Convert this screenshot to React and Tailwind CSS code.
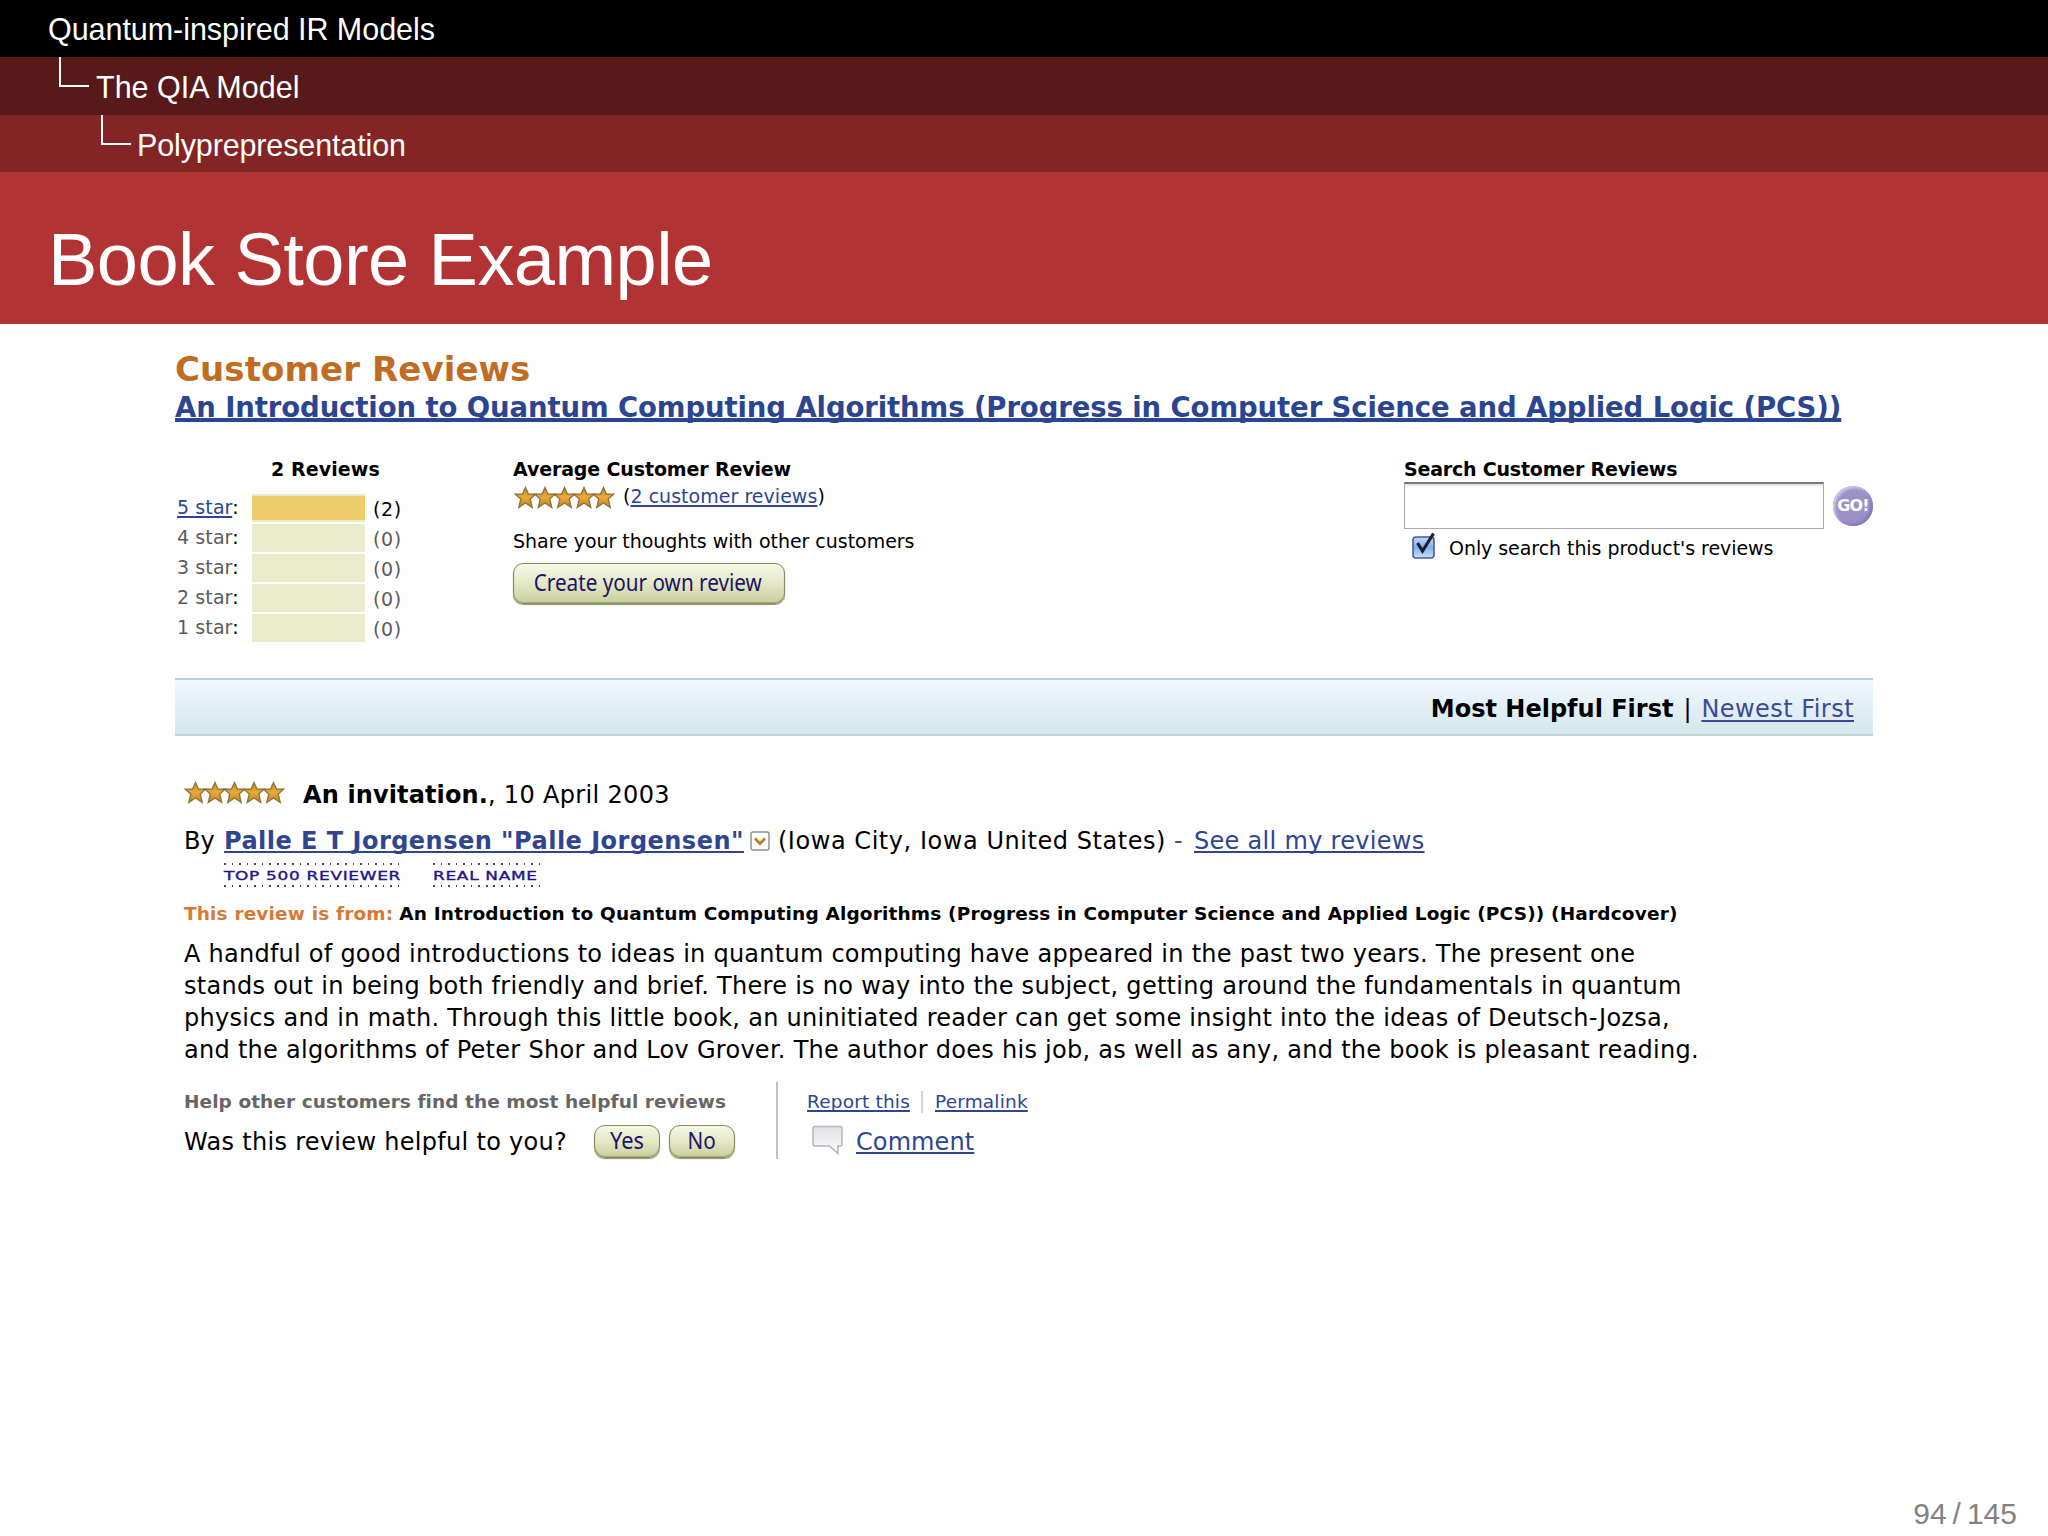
const link = "text-[#2f4590] underline underline-offset-[2px] decoration-2 [text-decoration-skip-ink:none]";

const ratings = [
  { label: "5 star", count: 2, active: true },
  { label: "4 star", count: 0 },
  { label: "3 star", count: 0 },
  { label: "2 star", count: 0 },
  { label: "1 star", count: 0 },
];

function Stars({ className = "" }) {
  return (
    <svg width="102" height="23" viewBox="0 0 102 23" className={className}>
      <defs>
        <linearGradient id="gold" x1="0" y1="0" x2="0" y2="1">
          <stop offset="0" stopColor="#c98d2c" />
          <stop offset="0.5" stopColor="#eaa936" />
          <stop offset="1" stopColor="#bd8122" />
        </linearGradient>
      </defs>
      {[0, 19.5, 39, 58.5, 78].map((x) => (
        <path
          key={x}
          transform={`translate(${x} 0)`}
          d="M11.5 1.6 L14.4 8 L21.6 8.2 L16.2 13 L18.2 21.4 L11.5 17 L4.8 21.4 L6.8 13 L1.4 8.2 L8.6 8 Z"
          fill="url(#gold)"
          stroke="#92753a"
          strokeWidth="1.4"
          strokeLinejoin="miter"
        />
      ))}
    </svg>
  );
}

function Branch() {
  return <span className="h-[29.5px] w-[30px] border-b-[2.5px] border-l-[2.5px] border-white" />;
}

function PillButton({ children, className = "" }) {
  return (
    <button
      className={`flex items-center justify-center border border-[#84895f] bg-linear-to-b from-[#f6f8e6] via-[#e4e8c6] to-[#c9cf9d] font-['Noto_Sans'] text-[#1c1466] shadow-[inset_0_-1px_1px_#a3a97c,0_1px_1px_#8f9468] ${className}`}
    >
      {children}
    </button>
  );
}

function Badge({ children, className = "" }) {
  const dots = "h-[2px] bg-[repeating-linear-gradient(90deg,#4a4a55_0_1.6px,transparent_1.6px_7.56px)]";
  return (
    <div className={`flex h-[24px] flex-col justify-between ${className}`}>
      <div className={dots} />
      <div className="origin-left scale-x-130 text-[13px] leading-[15px] tracking-[0.55px] text-[#1f1590] [-webkit-text-stroke:0.4px_#1f1590]">
        {children}
      </div>
      <div className={dots} />
    </div>
  );
}

function Header() {
  return (
    <header className="font-['Liberation_Sans'] text-[30.5px] text-white">
      <div className="h-[57px] bg-black pl-[48px] leading-[59px] tracking-[-0.05px]">Quantum-inspired IR Models</div>
      <div className="flex h-[58px] items-start bg-[#581a19] pl-[59px]">
        <Branch />
        <span className="pl-[7px] leading-[60px]">The QIA Model</span>
      </div>
      <div className="flex h-[57px] items-start bg-[#842525] pl-[101px]">
        <Branch />
        <span className="pl-[6px] leading-[60px] tracking-[-0.13px]">Polyprepresentation</span>
      </div>
      <h1 className="h-[152px] bg-[#b23333] pt-[48px] pl-[48px] text-[74px] leading-[80px] tracking-[-0.55px]">
        Book Store Example
      </h1>
    </header>
  );
}

function Histogram() {
  return (
    <div className="w-[338px]">
      <div className="ml-[96px] font-bold tracking-[0.1px]">2 Reviews</div>
      <div className="mt-[12px] flex flex-col gap-[2px]">
        {ratings.map((r) => (
          <div key={r.label} className="flex h-[28px] leading-[27px]">
            <div className="w-[77px] pl-[2px] tracking-[0.1px]">
              <span className={r.active ? link : "text-[#5c5c5c]"}>{r.label}</span>:
            </div>
            <div className={`h-full w-[113px] ${r.active ? "border-y-2 border-[#e9edcb] bg-[#eecd6b]" : "bg-[#e9edcb]"}`} />
            <div className={`pl-[8px] leading-[30px] tracking-[0.6px] ${r.active ? "" : "text-[#5c5c5c]"}`}>({r.count})</div>
          </div>
        ))}
      </div>
    </div>
  );
}

function Summary() {
  return (
    <div className="w-[891px]">
      <div className="font-bold tracking-[-0.13px]">Average Customer Review</div>
      <div className="flex h-[26px] leading-[28px]">
        <Stars className="mt-[4px] ml-px block" />
        <span className="ml-[7px] tracking-[0.03px]">
          (<a className={link}>2 customer reviews</a>)
        </span>
      </div>
      <div className="mt-[20px] tracking-[-0.03px]">Share your thoughts with other customers</div>
      <PillButton className="mt-[9px] h-[41px] w-[272px] rounded-[10px] text-[23px]">
        <span className="-mt-[3px] -ml-[2px] scale-x-90">Create your own review</span>
      </PillButton>
    </div>
  );
}

function Search() {
  return (
    <div className="w-[469px]">
      <div className="font-bold tracking-[-0.2px]">Search Customer Reviews</div>
      <div className="flex items-start">
        <div className="h-[47px] w-[420px] border border-t-2 border-[#a9a9b0] border-t-[#77777b] bg-white shadow-[inset_0_2px_2px_#e4e4e4]" />
        <button className="mt-[4px] ml-[9px] flex size-[40px] items-center justify-center rounded-full bg-[#9b90ca] text-[16px] font-bold tracking-[-0.8px] text-white shadow-[inset_2px_2px_3px_#cfcbe2,inset_-2px_-2px_3px_#8378b4]">
          GO!
        </button>
      </div>
      <div className="mt-[2px] flex">
        <svg width="28" height="30" viewBox="0 0 28 30" className="ml-[7px] block">
          <defs>
            <linearGradient id="box" x1="0" y1="0" x2="0" y2="1">
              <stop offset="0" stopColor="#c3d6f6" />
              <stop offset="0.5" stopColor="#86b0ea" />
              <stop offset="1" stopColor="#bfe3fb" />
            </linearGradient>
          </defs>
          <rect x="2" y="6" width="21" height="21" rx="3" fill="url(#box)" stroke="#4a5c96" strokeWidth="1.6" />
          <path d="M6.5 12 L11.5 20 L22.5 2.5" fill="none" stroke="#1a2030" strokeWidth="3.2" />
        </svg>
        <span className="mt-[4px] ml-[10px] tracking-[-0.06px]">Only search this product's reviews</span>
      </div>
    </div>
  );
}

function Review() {
  return (
    <article className="pt-[43px] pl-[9px] text-[24px]">
      <div className="flex h-[32px] leading-[32px]">
        <Stars className="mt-[2px] block" />
        <b className="ml-[17px] tracking-[0.12px]">An invitation.</b>
        <span className="tracking-[0.33px]">, 10 April 2003</span>
      </div>
      <div className="mt-[14px] flex h-[32px] leading-[32px]">
        <span className="w-[40px]">By</span>
        <a className={`tracking-[0.48px] font-bold ${link}`}>Palle E T Jorgensen "Palle Jorgensen"</a>
        <svg width="20" height="20" viewBox="0 0 20 20" className="mt-[6px] ml-[6px] block">
          <rect x="1" y="1" width="18" height="18" rx="2" fill="#fefefe" stroke="#8c8c8c" strokeWidth="1.4" />
          <path d="M5 7.5 L10 12.5 L15 7.5" fill="none" stroke="#bf7a1c" strokeWidth="2.8" />
        </svg>
        <span className="ml-[8px] tracking-[0.55px]">(Iowa City, Iowa United States)</span>
        <span className="ml-[8px] w-[20px] text-[#555]">-</span>
        <a className={`tracking-[0.3px] ${link}`}>See all my reviews</a>
      </div>
      <div className="mt-[6px] ml-[40px] flex">
        <Badge className="w-[176px]">TOP 500 REVIEWER</Badge>
        <Badge className="ml-[33px] w-[108px]">REAL NAME</Badge>
      </div>
      <div className="mt-[14px] flex h-[26px] gap-[6px] text-[18.5px] leading-[26px] font-bold">
        <span className="tracking-[0.16px] text-[#d57a36]">This review is from:</span>
        <span className="tracking-[0.17px]">
          An Introduction to Quantum Computing Algorithms (Progress in Computer Science and Applied Logic (PCS)) (Hardcover)
        </span>
      </div>
      <p className="mt-[11px] leading-[32px] tracking-[0.28px]">
        <span className="tracking-[0.25px]">
          A handful of good introductions to ideas in quantum computing have appeared in the past two years. The present one
        </span>
        <br />
        stands out in being both friendly and brief. There is no way into the subject, getting around the fundamentals in quantum<br />
        physics and in math. Through this little book, an uninitiated reader can get some insight into the ideas of Deutsch-Jozsa,<br />
        and the algorithms of Peter Shor and Lov Grover. The author does his job, as well as any, and the book is pleasant reading.
      </p>
      <div className="mt-[16px] flex h-[77px]">
        <div className="w-[594px] border-r-2 border-[#c0c0c6] pt-[7px]">
          <div className="text-[18.5px] leading-[26px] font-bold tracking-[0.07px] text-[#666]">
            Help other customers find the most helpful reviews
          </div>
          <div className="mt-[10px] flex leading-[34px]">
            <span className="w-[410px] tracking-[0.3px]">Was this review helpful to you?</span>
            <PillButton className="h-[33px] w-[66px] rounded-[11px] text-[23px]"><span className="-mt-[3px] scale-x-95">Yes</span></PillButton>
            <PillButton className="ml-[9px] h-[33px] w-[66px] rounded-[11px] text-[23px]"><span className="-mt-[3px] scale-x-90">No</span></PillButton>
          </div>
        </div>
        <div className="pt-[7px] pl-[29px]">
          <div className="flex items-center text-[18.5px] leading-[26px] tracking-[0.18px]">
            <a className={link}>Report this</a>
            <span className="mx-[11px] h-[22px] w-[2px] bg-[#cfd4dc]" />
            <a className={`ml-px ${link}`}>Permalink</a>
          </div>
          <div className="mt-[10px] flex leading-[34px]">
            <svg width="32" height="32" viewBox="0 0 32 32" className="ml-[5px] block">
              <defs>
                <linearGradient id="bubble" x1="0" y1="0" x2="0" y2="1">
                  <stop offset="0" stopColor="#e2e2e6" />
                  <stop offset="1" stopColor="#fafafa" />
                </linearGradient>
              </defs>
              <path
                d="M3 1.5 H28 Q30 1.5 30 3.5 V19 Q30 21 28 21 H26 V28.5 L17.5 21 H3 Q1 21 1 19 V3.5 Q1 1.5 3 1.5 Z"
                fill="url(#bubble)"
                stroke="#b4b4ba"
                strokeWidth="1.5"
              />
            </svg>
            <a className={`ml-[12px] tracking-[0.1px] ${link}`}>Comment</a>
          </div>
        </div>
      </div>
    </article>
  );
}

export default function App() {
  return (
    <div className="flex h-[1536px] w-[2048px] flex-col overflow-hidden bg-[#fefefe] font-['DejaVu_Sans',sans-serif] whitespace-nowrap text-black">
      <Header />
      <main className="flex-1 px-[175px] pt-[25px]">
        <h2 className="text-[34px] leading-[40px] font-bold tracking-[0.1px] text-[#c16c24]">Customer Reviews</h2>
        <a className="block text-[27.5px] leading-[36px] font-bold tracking-[-0.1px] text-[#2b4590] underline decoration-4 underline-offset-[1px] [text-decoration-skip-ink:none]">
          An Introduction to Quantum Computing Algorithms (Progress in Computer Science and Applied Logic (PCS))
        </a>
        <section className="mt-[31px] flex h-[222px] text-[19px] leading-[26px]">
          <Histogram />
          <Summary />
          <Search />
        </section>
        <div className="flex h-[58px] justify-end border-t-2 border-b-2 border-t-[#b9d0e0] border-b-[#c3d3da] bg-linear-to-b from-[#f1f8ff] to-[#d5e6ed] pr-[19px] text-[24px] leading-[58px]">
          <b>Most Helpful First</b>
          <span className="w-[28px] text-center">|</span>
          <a className="text-[#3c4a94] underline decoration-2 underline-offset-[3px] tracking-[0.45px]">Newest First</a>
        </div>
        <Review />
      </main>
      <footer className="flex h-[40px] justify-end gap-[6px] pr-[31px] font-['Liberation_Sans'] text-[30px] leading-[36px] text-[#828282]">
        <span>94</span>
        <span>/</span>
        <span>145</span>
      </footer>
    </div>
  );
}
